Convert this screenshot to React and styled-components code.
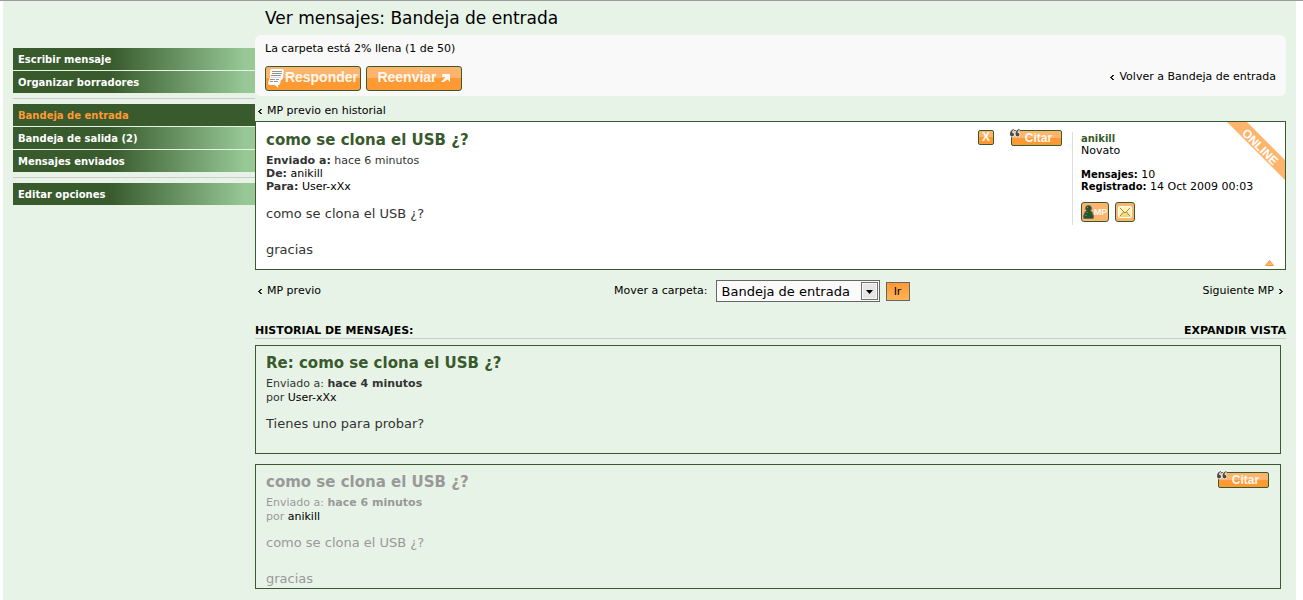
import React, { useState } from 'react';
import styled, { createGlobalStyle, css } from 'styled-components';

const GlobalStyle = createGlobalStyle`
  * {
    box-sizing: border-box;
  }

  body {
    margin: 0;
    background: #fff;
    color: #000;
    font-family: Verdana, "DejaVu Sans", sans-serif;
    font-size: 11px;
    line-height: 14px;
  }

  h2, h3, h4, p, ul {
    margin: 0;
    padding: 0;
  }

  a {
    color: inherit;
    text-decoration: none;
  }

  svg {
    display: block;
  }
`;

const Frame = styled.div`
  border-top: 1px solid #9c9c9c;
  padding: 0 7px 0 3px;
`;

const Page = styled.div`
  display: flex;
  align-items: flex-start;
  min-height: calc(100vh - 1px);
  padding: 0 10px;
  background: #e8f3e7;
`;

const Sidebar = styled.nav`
  flex: 0 0 242px;
  padding-top: 47px;
`;

const MenuGroup = styled.ul`
  display: flex;
  flex-direction: column;
  gap: 1px;
  list-style: none;

  & + & {
    margin-top: 5px;
    padding-top: 5px;
    border-top: 1px solid #ccc;
  }
`;

const MenuLink = styled.a`
  display: block;
  padding: 2px 5px 0;
  font-size: 10px;
  line-height: 20px;
  font-weight: bold;
  color: ${props => props.$active ? '#ff9933' : '#fff'};
  background: ${props => props.$active
    ? '#385a2d'
    : 'linear-gradient(to right, #385a2d 40%, #97c896 96%)'};
`;

const Content = styled.main`
  flex: 1;
  min-width: 0;
`;

const Title = styled.h2`
  padding: 1px 10px 0;
  font-size: 17px;
  font-weight: normal;
  line-height: 33px;
`;

const Panel = styled.div`
  display: flex;
  justify-content: space-between;
  align-items: flex-end;
  padding: 7px 10px 5px;
  border-radius: 6px;
  background: #f9f9f9;
`;

const PanelButtons = styled.div`
  display: flex;
  gap: 5px;
  margin-top: 10px;
`;

const BackLink = styled.a`
  display: flex;
  align-items: center;
  gap: 5px;
  margin-bottom: ${props => props.$raised ? '7px' : '0'};
`;

const orange = css`
  border: 1px solid #385a2d;
  border-radius: 3px;
  background: linear-gradient(#fdb56d 50%, #ff9933 50%);
  color: #fff8f0;
  font-family: "Liberation Sans", Arial, sans-serif;
  font-weight: bold;
`;

const BigButton = styled.button`
  ${orange}
  display: flex;
  align-items: center;
  justify-content: ${props => props.$end ? 'flex-end' : 'center'};
  gap: ${props => props.$end ? '1px' : '4px'};
  width: 96px;
  height: 25px;
  padding: 0 2px;
  font-size: 14px;
  line-height: 20px;
  white-space: nowrap;
  cursor: pointer;

  span {
    margin-bottom: 3px;
  }
`;

const TopNav = styled.div`
  padding: 8px 3px 3px;
`;

const Message = styled.article`
  position: relative;
  display: flex;
  border: 1px solid #385a2d;
  background: #fff;
`;

const Post = styled.div`
  flex: 1;
  min-width: 0;
  padding: 8px 10px 10px;
  color: #333;
`;

const Subject = styled.h3`
  margin-bottom: 4px;
  font-size: 15px;
  line-height: 20px;
  color: ${props => props.$old ? '#999' : '#385a2d'};
`;

const Meta = styled.p`
  line-height: 13px;
`;

const User = styled.a`
  color: #000;
`;

const Body = styled.p`
  margin-top: 12px;
  font-size: 13px;
  line-height: 18px;
  white-space: pre-line;
`;

const PostTools = styled.div`
  display: flex;
  align-items: flex-start;
  gap: 17px;
  padding: 8px 10px 0;
`;

const SmallButton = styled.button`
  ${orange}
  position: relative;
  border-radius: 2px;
  width: ${props => props.$wide ? '51px' : '16px'};
  height: ${props => props.$wide ? '16px' : '15px'};
  padding: ${props => props.$wide ? '0 0 0 4px' : '0'};
  font-size: 12px;
  line-height: 13px;
  text-align: center;
  cursor: pointer;

  svg {
    position: absolute;
    left: -3px;
    top: -3px;
  }
`;

const Side = styled.aside`
  display: flex;
  flex-direction: column;
  justify-content: space-between;
  width: 213px;
  padding: 10px 0 3px;
`;

const Profile = styled.div`
  padding: 1px 8px 3px;
  border-left: 1px solid #ddd;
  line-height: 12px;

  b {
    font-size: 10px;
  }
`;

const ProfileName = styled.a`
  color: #385a2d;
`;

const ProfileStats = styled.p`
  margin-top: 12px;
`;

const ContactLinks = styled.div`
  display: flex;
  gap: 6px;
  margin-top: 9px;
`;

const ContactLink = styled.a`
  ${orange}
  display: flex;
  align-items: center;
  justify-content: center;
  height: 20px;
  width: ${props => props.$wide ? '28px' : '20px'};
  background: #fdb56d;
  font-size: 9px;
`;

const TopLink = styled.a`
  align-self: flex-end;
  margin-right: 11px;
`;

const Online = styled.svg`
  position: absolute;
  top: 0;
  right: 0;
`;

const BottomNav = styled.div`
  display: flex;
  justify-content: space-between;
  align-items: center;
  height: 40px;
  padding: 2px 3px 0;
`;

const MoveForm = styled.form`
  display: flex;
  align-items: center;
  gap: 6px;

  label {
    margin-right: 2px;
  }
`;

const SelectBox = styled.div`
  position: relative;

  svg {
    position: absolute;
    right: 2px;
    top: 2px;
    pointer-events: none;
  }
`;

const FolderSelect = styled.select`
  appearance: none;
  display: block;
  width: 164px;
  height: 22px;
  padding: 0 20px 0 5px;
  border: 1px solid #666;
  border-radius: 0;
  background: #fafafa;
  color: #000;
  font-family: inherit;
  font-size: 13px;
`;

const GoButton = styled.button`
  width: 24px;
  height: 19px;
  padding: 0;
  border: 1px solid #666;
  background: linear-gradient(#ff9933, #fdb555);
  font-family: inherit;
  font-size: 11px;
  line-height: 17px;
  cursor: pointer;
`;

const HistoryHead = styled.div`
  display: flex;
  justify-content: space-between;
  padding-top: 14px;
  border-bottom: 1px solid #ccc;
  font-weight: bold;
  text-transform: uppercase;
`;

const HistoryTitle = styled.h4`
  font-size: 11px;
`;

const HistoryList = styled.div`
  display: flex;
  flex-direction: column;
  gap: 10px;
  padding: 6px 5px 11px 0;
`;

const HistoryItem = styled.article`
  display: flex;
  justify-content: space-between;
  min-height: 109px;
  padding: 7px 11px 0 10px;
  border: 1px solid #385a2d;
  color: ${props => props.$old ? '#999' : '#333'};

  ${Meta} {
    line-height: 14px;
  }

  ${Body} {
    margin-top: 10px;
  }
`;

const Angle = ({ right }) => (
  <svg width="4" height="7" viewBox="0 0 4 7" fill="#222" shapeRendering="crispEdges">
    {right
      ? <path d="M0 1h2v1h-2zM1 2h2v1h-2zM2 3h2v1h-2zM1 4h2v1h-2zM0 5h2v1h-2z" />
      : <path d="M2 1h2v1h-2zM1 2h2v1h-2zM0 3h2v1h-2zM1 4h2v1h-2zM2 5h2v1h-2z" />}
  </svg>
);

const BubblesIcon = () => (
  <svg width="16" height="19" viewBox="0 0 16 19">
    <path d="M4 0h10q2 0 2 2l-1 7q-.3 2-2 2l-.6 3q-.4 2-2 2h-.4l.500 3-3.500-3H2q-2 0-2-2l1-3q.5-2 1-2V2q0-2 2-2z" fill="#fff" />
    <path d="M4 2.500h10M4 4.500h10M3 6.500h10M2 10.500h5M8 10.500h3M2 12.500h3M6 12.500h4" stroke="#8e8e8e" />
    <path d="M3 8.500h10" stroke="#d8d8d8" />
  </svg>
);

const ForwardIcon = () => (
  <svg width="10" height="10" viewBox="0 0 10 10">
    <path d="M1 0h8v8L6.500 5.500 3 8H0l4.500-5H1z" fill="#fff8f0" />
  </svg>
);

const QuoteIcon = () => (
  <svg width="12" height="10" viewBox="0 0 12 10">
    <g fill="#4a4a4a" stroke="#f4f4f4" strokeWidth="1.400" paintOrder="stroke">
      <path d="M5 1C2.500 1.500 1 3.500 1 6c0 1.500.7 2.500 2 2.500S5 7.600 5 6.500 4.200 4.800 3 4.800C3 3.200 3.800 2.200 5 1.700z" />
      <path d="M10.500 1C8 1.500 6.500 3.500 6.500 6c0 1.500.7 2.500 2 2.500s2-.9 2-2-.8-1.700-2-1.700c0-1.600.8-2.600 2-3.100z" />
    </g>
  </svg>
);

const PersonIcon = () => (
  <svg width="11" height="14" viewBox="0 0 11 14">
    <path d="M5.500 .5c2 0 3 1.200 3 2.800 0 1.100-.5 1.900-1.100 2.400 1.500.8 2.100 2 2.100 3.300 1 .9 1.300 2.500.6 4.500H.9c-.7-2-.4-3.600.6-4.500 0-1.300.6-2.500 2.100-3.300-.6-.5-1.100-1.300-1.100-2.400 0-1.600 1-2.800 3-2.800z" fill="#2d5524" stroke="#5c6878" />
    <path d="M4 2.500h1M3.500 7.500h1M2.500 10.500h1" stroke="#8b97a5" />
  </svg>
);

const MailIcon = () => (
  <svg width="14" height="12" viewBox="0 0 14 12">
    <rect x="0.500" y="0.500" width="13" height="11" rx="1" fill="#fff3b8" stroke="#fff" />
    <path d="M1 11h12L9 6 7 7.500 5 6z" fill="#f4d978" />
    <path d="M2 2l5 5 5-5M2 10l3.500-4M12 10L8.500 6" fill="none" stroke="#a08a45" />
  </svg>
);

const QuoteButton = () => (
  <SmallButton type="button" $wide>
    <QuoteIcon />
    Citar
  </SmallButton>
);

const menu = [
  ['Escribir mensaje', 'Organizar borradores'],
  ['Bandeja de entrada', 'Bandeja de salida (2)', 'Mensajes enviados'],
  ['Editar opciones']
];

const history = [
  {
    subject: 'Re: como se clona el USB ¿?',
    sent: 'hace 4 minutos',
    user: 'User-xXx',
    text: 'Tienes uno para probar?'
  },
  {
    subject: 'como se clona el USB ¿?',
    sent: 'hace 6 minutos',
    user: 'anikill',
    text: 'como se clona el USB ¿?\n\ngracias',
    old: true
  }
];

export default function App() {
  const [folder, setFolder] = useState('Bandeja de entrada');

  return (
    <Frame>
      <GlobalStyle />
      <Page>
        <Sidebar>
          {menu.map(group => (
            <MenuGroup key={group[0]}>
              {group.map(item => (
                <li key={item}>
                  <MenuLink href="#" $active={item === 'Bandeja de entrada'}>{item}</MenuLink>
                </li>
              ))}
            </MenuGroup>
          ))}
        </Sidebar>

        <Content>
          <Title>Ver mensajes: Bandeja de entrada</Title>
          <Panel>
            <div>
              <p>La carpeta está 2% llena (1 de 50)</p>
              <PanelButtons>
                <BigButton type="button" $end><BubblesIcon /><span>Responder</span></BigButton>
                <BigButton type="button"><span>Reenviar</span><ForwardIcon /></BigButton>
              </PanelButtons>
            </div>
            <BackLink href="#" $raised><Angle />Volver a Bandeja de entrada</BackLink>
          </Panel>

          <TopNav>
            <BackLink href="#"><Angle />MP previo en historial</BackLink>
          </TopNav>

          <Message>
            <Post>
              <Subject>como se clona el USB ¿?</Subject>
              <Meta><b>Enviado a:</b> hace 6 minutos</Meta>
              <Meta><b>De:</b> <User href="#">anikill</User></Meta>
              <Meta><b>Para:</b> <User href="#">User-xXx</User></Meta>
              <Body>{'como se clona el USB ¿?\n\ngracias'}</Body>
            </Post>
            <PostTools>
              <SmallButton type="button">X</SmallButton>
              <QuoteButton />
            </PostTools>
            <Side>
              <Profile>
                <ProfileName href="#"><b>anikill</b></ProfileName>
                <p>Novato</p>
                <ProfileStats>
                  <b>Mensajes:</b> 10<br />
                  <b>Registrado:</b> 14 Oct 2009 00:03
                </ProfileStats>
                <ContactLinks>
                  <ContactLink href="#" $wide><PersonIcon />MP</ContactLink>
                  <ContactLink href="#" aria-label="Email"><MailIcon /></ContactLink>
                </ContactLinks>
              </Profile>
              <TopLink href="#" aria-label="Arriba">
                <svg width="9" height="6" viewBox="0 0 9 6">
                  <path d="M4.500 0.500L8.500 5.500H0.500z" fill="#fdb56d" stroke="#ff9933" />
                </svg>
              </TopLink>
            </Side>
            <Online width="58" height="58" viewBox="0 0 58 58">
              <path d="M0 0h20l38 38v20z" fill="#fdb56d" />
              <text
                transform="translate(33 25) rotate(45)"
                y="4"
                textAnchor="middle"
                fill="#fff"
                fontFamily="Liberation Sans, Arial, sans-serif"
                fontSize="12"
                fontWeight="bold"
              >
                ONLINE
              </text>
            </Online>
          </Message>

          <BottomNav>
            <BackLink href="#"><Angle />MP previo</BackLink>
            <MoveForm onSubmit={e => e.preventDefault()}>
              <label htmlFor="folder">Mover a carpeta:</label>
              <SelectBox>
                <FolderSelect id="folder" value={folder} onChange={e => setFolder(e.target.value)}>
                  <option>Bandeja de entrada</option>
                  <option>Mensajes enviados</option>
                </FolderSelect>
                <svg width="17" height="18" viewBox="0 0 17 18">
                  <rect x="0.500" y="0.500" width="16" height="17" fill="#e6e6e6" stroke="#707070" />
                  <rect x="1.500" y="1.500" width="14" height="15" fill="none" stroke="#f8f8f8" />
                  <path d="M5 8h7l-3.500 4z" fill="#000" />
                </svg>
              </SelectBox>
              <GoButton type="submit">Ir</GoButton>
            </MoveForm>
            <BackLink href="#">Siguiente MP<Angle right /></BackLink>
          </BottomNav>

          <HistoryHead>
            <HistoryTitle>Historial de mensajes:</HistoryTitle>
            <a href="#">Expandir vista</a>
          </HistoryHead>
          <HistoryList>
            {history.map(post => (
              <HistoryItem key={post.sent} $old={post.old}>
                <div>
                  <Subject $old={post.old}>{post.subject}</Subject>
                  <Meta>Enviado a: <b>{post.sent}</b></Meta>
                  <Meta>por <User href="#">{post.user}</User></Meta>
                  <Body>{post.text}</Body>
                </div>
                {post.old ? <QuoteButton /> : null}
              </HistoryItem>
            ))}
          </HistoryList>
        </Content>
      </Page>
    </Frame>
  );
}
